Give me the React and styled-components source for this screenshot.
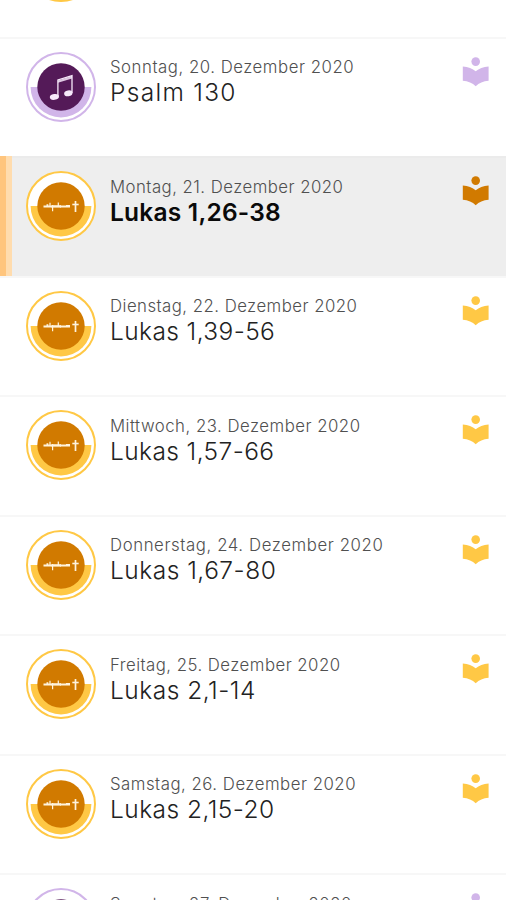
import React from 'react'
import styled, { createGlobalStyle } from 'styled-components'

const GlobalStyle = createGlobalStyle`
  *, *::before, *::after {
    box-sizing: border-box;
  }
  body {
    margin: 0;
    background: #fff;
    font-family: Inter, 'Open Sans', sans-serif;
  }
`

const Screen = styled.main`
  width: 100%;
  height: 100vh;
  overflow: hidden;
  background: #fff;
`

const List = styled.ul`
  list-style: none;
  margin: -82.8px 0 0;
  padding: 0;
`

const Row = styled.li`
  display: flex;
  align-items: flex-start;
  height: 119.5px;
  padding: 13px 16px 0 ${({ $active }) => ($active ? '0' : '26px')};
  border-top: 2px solid ${({ $active }) => ($active ? '#ebebeb' : '#f7f7f7')};
  background: ${({ $active }) => ($active ? '#eee' : '#fff')};
`

const Marker = styled.span`
  align-self: stretch;
  width: 12px;
  margin: -15px 14px 0 0;
  background: #ffdcae;
  border-left: 6px solid #ffc57d;
`

const Badge = styled.svg`
  flex: none;
  width: 70px;
  height: 70px;
`

const Body = styled.div`
  flex: 1;
  padding: 4.5px 0 0 14px;
  white-space: nowrap;
`

const DateText = styled.p`
  margin: 0;
  font-size: 16.8px;
  line-height: 22px;
  font-weight: 300;
  letter-spacing: ${({ $tracking }) => $tracking}px;
  color: #505050;
`

const Title = styled.h2`
  margin: 0;
  font-size: 24.5px;
  line-height: 29px;
  font-weight: ${({ $active }) => ($active ? 600 : 300)};
  letter-spacing: ${({ $tracking }) => $tracking}px;
  color: ${({ $active }) => ($active ? '#0a0a0a' : '#222')};
`

const Reader = styled.svg`
  flex: none;
  width: 28px;
  height: 30px;
  margin-top: 5px;
  color: ${({ $color }) => $color};
`

const themes = {
  psalm: { light: '#d1b5e9', dark: '#541a58' },
  gospel: { light: '#ffc845', dark: '#d17a00' },
}

const entries = [
  { id: 19, kind: 'gospel' },
  { id: 20, kind: 'psalm', date: 'Sonntag, 20. Dezember 2020', title: 'Psalm 130', dateTracking: 0.52, titleTracking: 1.3 },
  { id: 21, kind: 'gospel', date: 'Montag, 21. Dezember 2020', title: 'Lukas 1,26-38', dateTracking: 0.46, titleTracking: 0.22, active: true },
  { id: 22, kind: 'gospel', date: 'Dienstag, 22. Dezember 2020', title: 'Lukas 1,39-56', dateTracking: 0.46, titleTracking: 0.4 },
  { id: 23, kind: 'gospel', date: 'Mittwoch, 23. Dezember 2020', title: 'Lukas 1,57-66', dateTracking: 0.49, titleTracking: 0.4 },
  { id: 24, kind: 'gospel', date: 'Donnerstag, 24. Dezember 2020', title: 'Lukas 1,67-80', dateTracking: 0.59, titleTracking: 0.5 },
  { id: 25, kind: 'gospel', date: 'Freitag, 25. Dezember 2020', title: 'Lukas 2,1-14', dateTracking: 0.46, titleTracking: 0.5 },
  { id: 26, kind: 'gospel', date: 'Samstag, 26. Dezember 2020', title: 'Lukas 2,15-20', dateTracking: 0.5, titleTracking: 0.45 },
  { id: 27, kind: 'psalm', date: 'Sonntag, 27. Dezember 2020', dateTracking: 0.54 },
]

function NotesGlyph() {
  return (
    <g fill="#f7e9fa">
      <ellipse cx="28.4" cy="44.9" rx="4.6" ry="2.9" transform="rotate(-8 28.4 44.9)" />
      <ellipse cx="42.3" cy="41.3" rx="4.2" ry="2.9" transform="rotate(-8 42.3 41.3)" />
      <path d="M31.9 44.5V28L46 23.6V41" fill="none" stroke="#f7e9fa" strokeWidth="1.3" />
      <path d="M31.9 28.4L46 24v2.4l-14.1 4.4z" fillOpacity=".85" />
    </g>
  )
}

// scripture line ending in a cross
function CrossGlyph() {
  return (
    <g fill="none" stroke="#fff3dd">
      <path d="M17.5 35.4H26M34 35.4H44" strokeWidth="2" />
      <path d="M25.5 35.4H35" strokeWidth="2.4" />
      <path d="M20.5 34.2h1.8M40 34.8h4" strokeWidth="1.8" />
      <path d="M24 31.8v4M26.6 34v6.2M32.3 31.4v4.6" strokeWidth="1.2" />
      <path d="M49.5 30v11" strokeWidth="1.7" />
      <path d="M46.3 33.5h6.4" strokeWidth="1.6" />
    </g>
  )
}

function KindBadge({ kind }) {
  const { light, dark } = themes[kind]
  return (
    <Badge viewBox="0 0 70 70">
      <circle cx="35" cy="35" r="34" fill="#fff" stroke={light} strokeWidth="2" />
      <path d="M4.6 35a30.4 30.4 0 0 0 60.8 0z" fill={light} />
      <circle cx="35" cy="35" r="23.7" fill={dark} />
      {kind === 'psalm' ? <NotesGlyph /> : <CrossGlyph />}
    </Badge>
  )
}

function ReaderIcon({ color }) {
  return (
    <Reader viewBox="0 0 28 30" $color={color}>
      <circle cx="13.7" cy="4.6" r="4.3" fill="currentColor" />
      <path
        d="M.8 9.5Q8.8 10 13.7 14.3Q18.6 10 26.6 9.5V23.8Q18.6 24.5 13.7 29.3Q8.8 24.5 .8 23.8z"
        fill="currentColor"
      />
    </Reader>
  )
}

function Entry({ kind, date, title, active, dateTracking, titleTracking }) {
  const { light, dark } = themes[kind]
  return (
    <Row $active={active}>
      {active && <Marker />}
      <KindBadge kind={kind} />
      <Body>
        {date && <DateText $tracking={dateTracking}>{date}</DateText>}
        {title && (
          <Title $active={active} $tracking={titleTracking}>
            {title}
          </Title>
        )}
      </Body>
      <ReaderIcon color={active ? dark : light} />
    </Row>
  )
}

export default function App() {
  return (
    <Screen>
      <GlobalStyle />
      <List>
        {entries.map((entry) => (
          <Entry key={entry.id} {...entry} />
        ))}
      </List>
    </Screen>
  )
}
